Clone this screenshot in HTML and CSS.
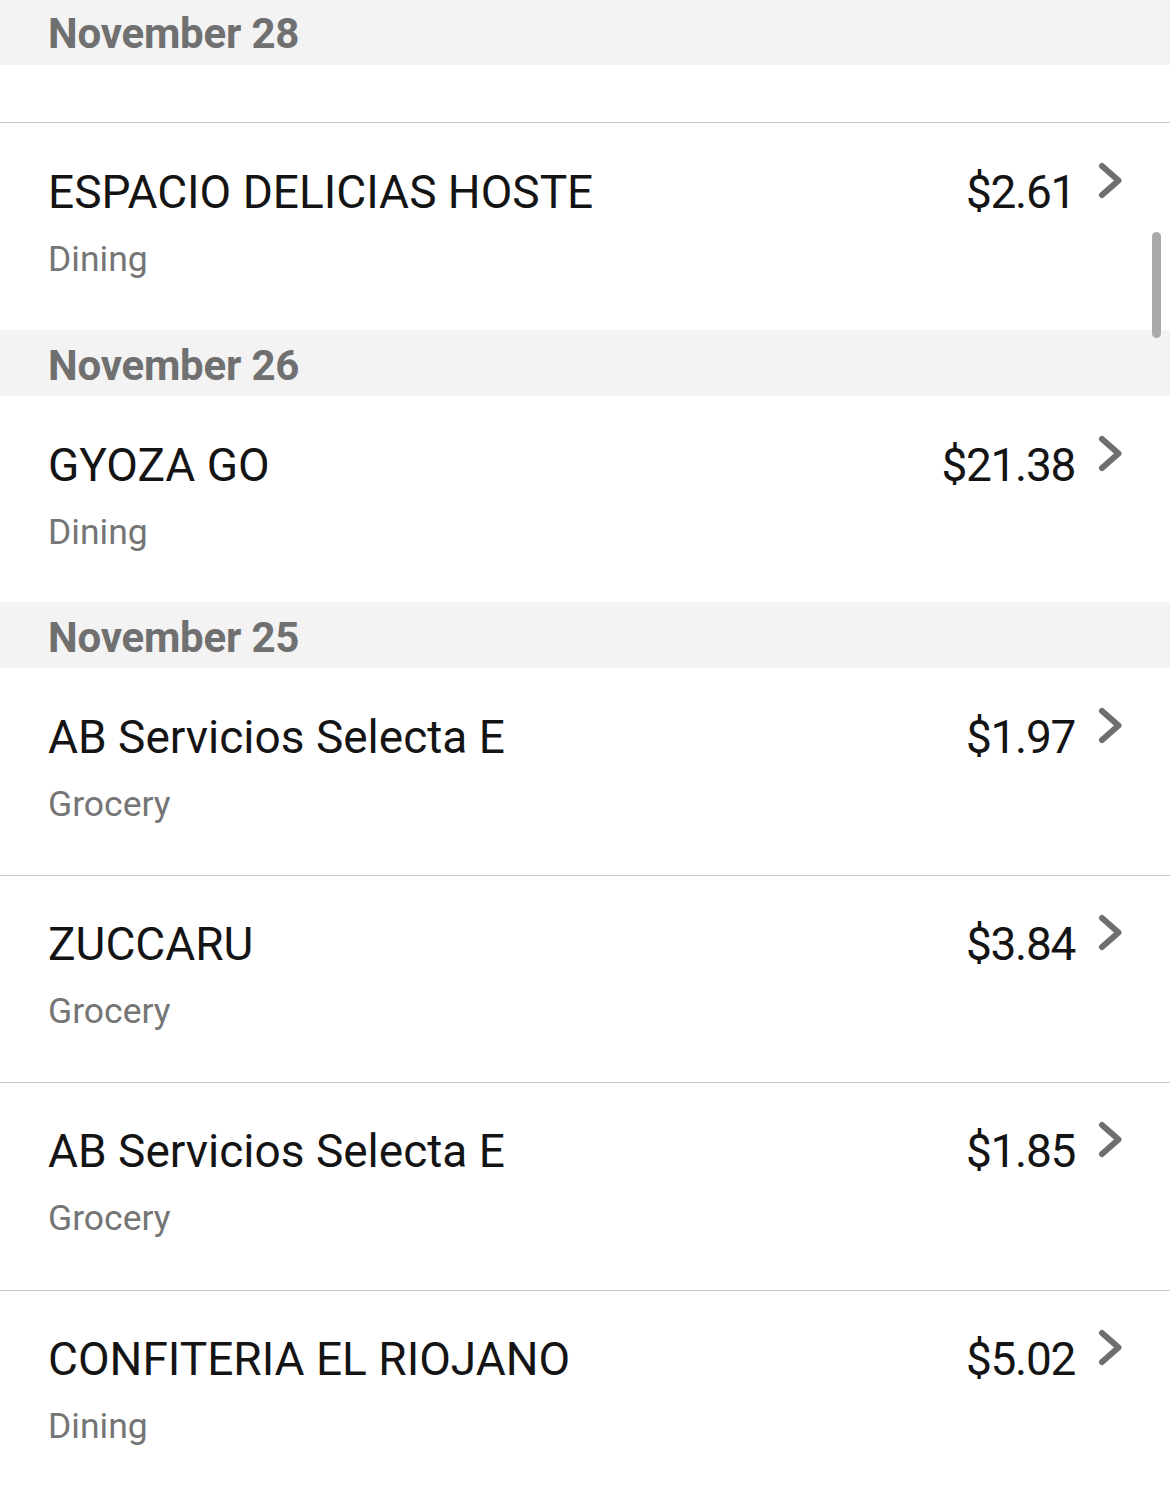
FILE: index.html
```html
<!DOCTYPE html>
<html lang="en">
<head>
<meta charset="utf-8">
<title>Transactions</title>
<link rel="stylesheet" href="styles.css">
</head>
<body>
<div class="list">
  <div class="date-header first">November 28</div>
  <div class="clipped-row"></div>

  <div class="row">
    <div class="info">
      <div class="title">ESPACIO DELICIAS HOSTE</div>
      <div class="category">Dining</div>
    </div>
    <div class="amount">$2.61</div>
    <svg class="chev" viewBox="0 0 25 38" width="25" height="38"><polyline points="4,4 20.5,18.5 4,33" /></svg>
  </div>

  <div class="date-header">November 26</div>
  <div class="row">
    <div class="info">
      <div class="title">GYOZA GO</div>
      <div class="category">Dining</div>
    </div>
    <div class="amount">$21.38</div>
    <svg class="chev" viewBox="0 0 25 38" width="25" height="38"><polyline points="4,4 20.5,18.5 4,33" /></svg>
  </div>

  <div class="date-header">November 25</div>
  <div class="row">
    <div class="info">
      <div class="title">AB Servicios Selecta E</div>
      <div class="category">Grocery</div>
    </div>
    <div class="amount">$1.97</div>
    <svg class="chev" viewBox="0 0 25 38" width="25" height="38"><polyline points="4,4 20.5,18.5 4,33" /></svg>
  </div>
  <div class="row sep">
    <div class="info">
      <div class="title">ZUCCARU</div>
      <div class="category">Grocery</div>
    </div>
    <div class="amount">$3.84</div>
    <svg class="chev" viewBox="0 0 25 38" width="25" height="38"><polyline points="4,4 20.5,18.5 4,33" /></svg>
  </div>
  <div class="row sep">
    <div class="info">
      <div class="title">AB Servicios Selecta E</div>
      <div class="category">Grocery</div>
    </div>
    <div class="amount">$1.85</div>
    <svg class="chev" viewBox="0 0 25 38" width="25" height="38"><polyline points="4,4 20.5,18.5 4,33" /></svg>
  </div>
  <div class="row sep">
    <div class="info">
      <div class="title">CONFITERIA EL RIOJANO</div>
      <div class="category">Dining</div>
    </div>
    <div class="amount">$5.02</div>
    <svg class="chev" viewBox="0 0 25 38" width="25" height="38"><polyline points="4,4 20.5,18.5 4,33" /></svg>
  </div>
</div>
<div class="scrollbar"></div>
</body>
</html>
```

FILE: styles.css
```css
html, body {
  margin: 0;
  padding: 0;
  background: #ffffff;
}
body {
  width: 1170px;
  height: 1487px;
  overflow: hidden;
  position: relative;
  font-family: Roboto, "Noto Sans", sans-serif;
}
.list {
  display: flex;
  flex-direction: column;
}
.date-header {
  box-sizing: border-box;
  height: 66px;
  padding: 6px 0 0 48px;
  background: #f3f3f3;
  color: #707070;
  font-weight: 700;
  font-size: 42px;
  line-height: 60px;
  letter-spacing: -0.2px;
}
.date-header.first {
  height: 65px;
  padding-top: 4px;
}
.clipped-row {
  height: 57px;
  border-bottom: 1px solid #c8c8c8;
}
.row {
  box-sizing: border-box;
  height: 206.5px;
  display: flex;
  align-items: flex-start;
  padding: 41px 47px 0 48px;
}
.row.sep {
  border-top: 1px solid #c8c8c8;
  height: 207.5px;
  padding-top: 40px;
}
.info {
  flex: 1;
  display: flex;
  flex-direction: column;
}
.title {
  font-size: 46px;
  line-height: 56px;
  color: #141414;
}
.category {
  margin-top: 18px;
  font-size: 35.5px;
  line-height: 42px;
  color: #757575;
}
.amount {
  font-size: 46px;
  line-height: 56px;
  color: #141414;
  letter-spacing: -1.3px;
  margin-right: 23px;
}
.chev {
  margin-top: -2px;
  flex: none;
}
.chev polyline {
  fill: none;
  stroke: #6e6e6e;
  stroke-width: 6;
  stroke-linecap: round;
  stroke-linejoin: round;
}
.scrollbar {
  position: absolute;
  left: 1152px;
  top: 232px;
  width: 9px;
  height: 106px;
  border-radius: 5px;
  background: #a9a9a9;
}
```
